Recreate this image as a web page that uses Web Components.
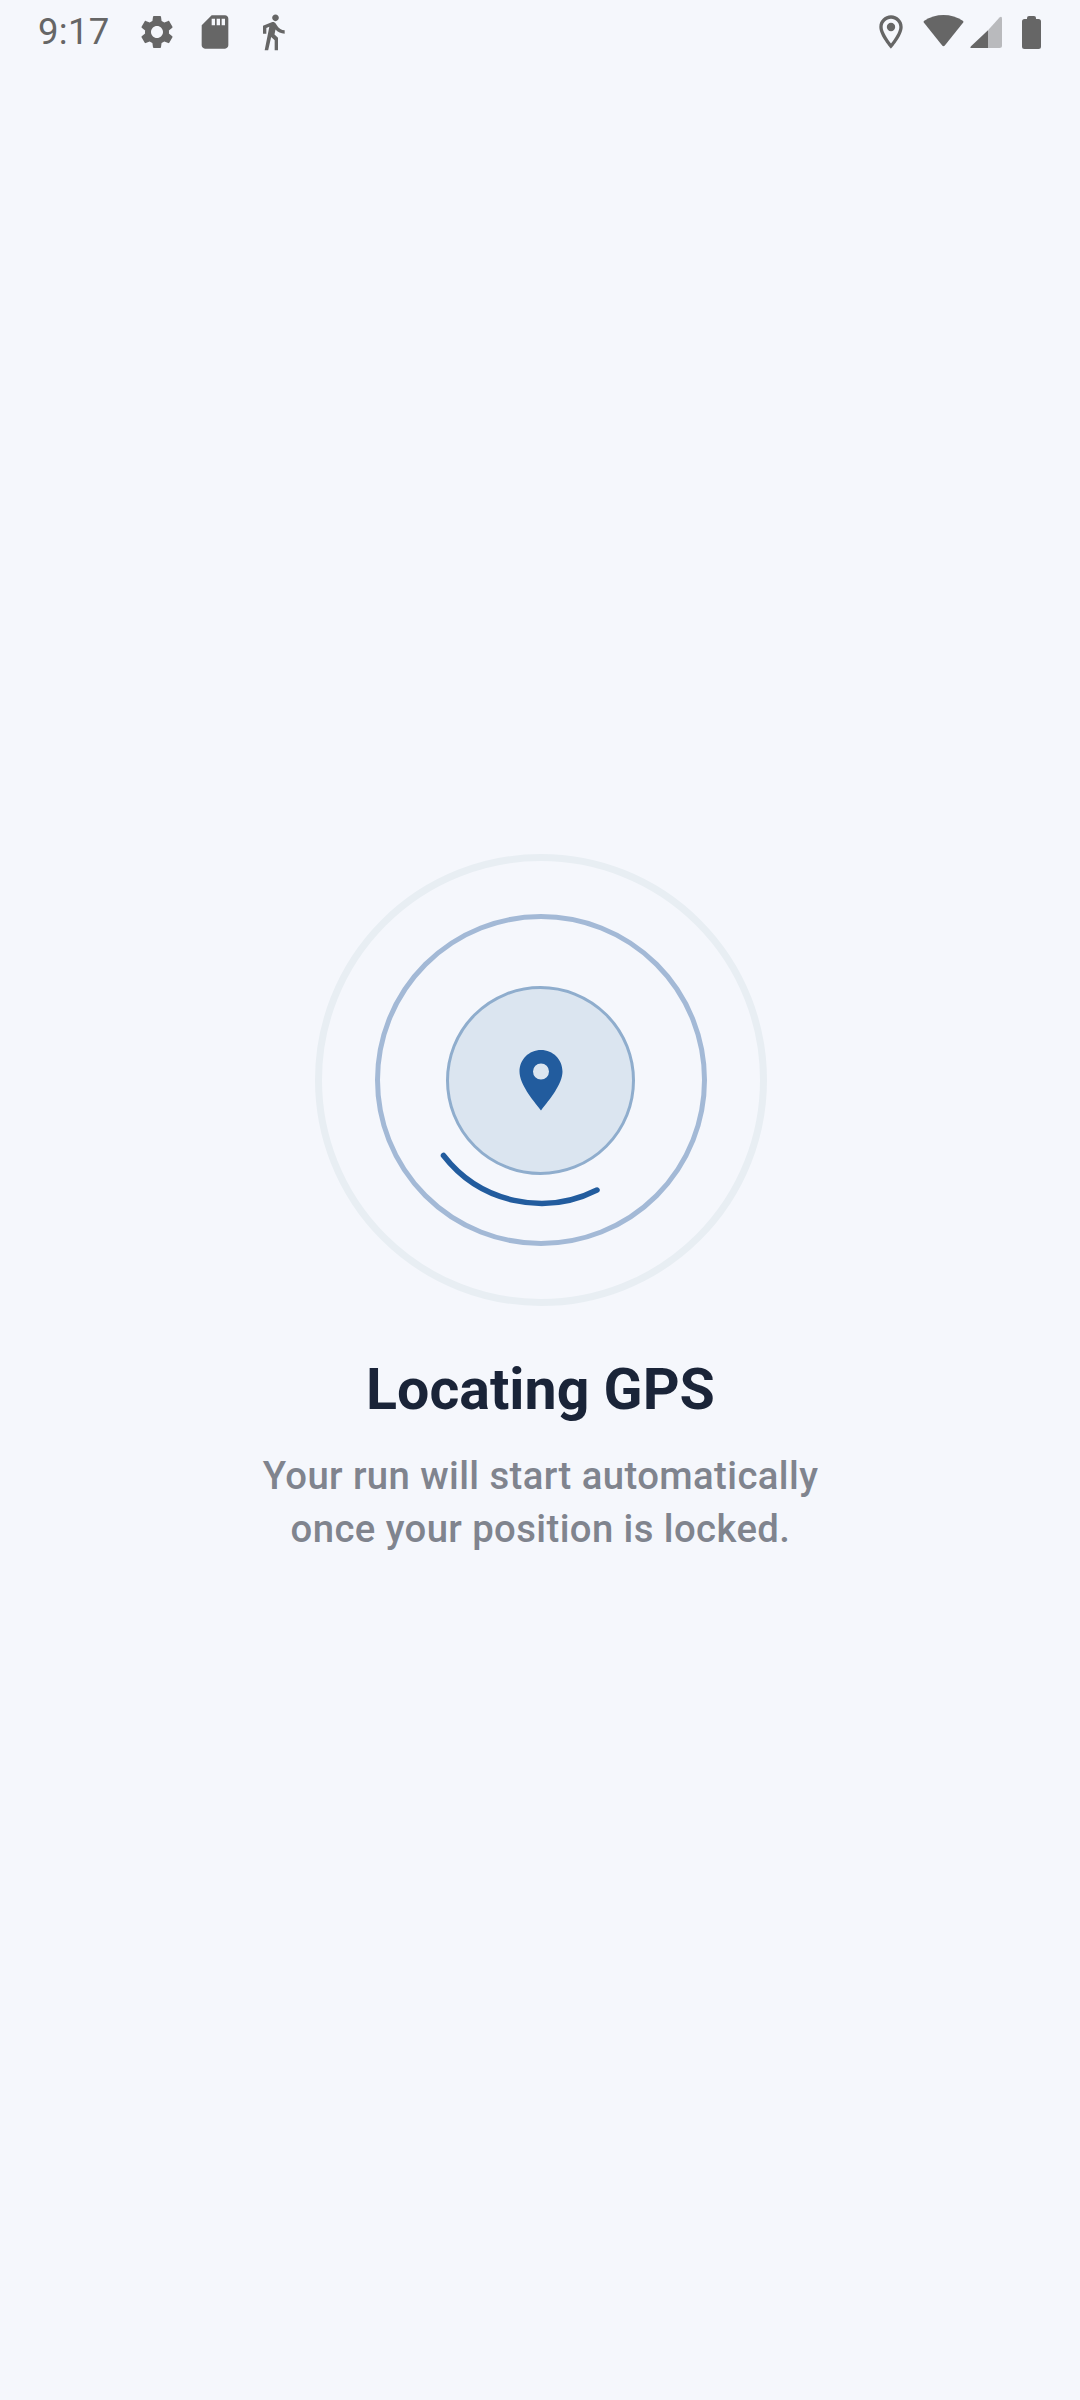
<!DOCTYPE html>
<html lang="en"><head><meta charset="utf-8"><title>Locating GPS</title>
<style>
html,body{margin:0;padding:0;background:#f5f7fc}
body{width:1080px;height:2400px;overflow:hidden;font-family:Roboto,"Liberation Sans",sans-serif}
</style></head><body>
<gps-screen>
  <status-bar slot="status" time="9:17"></status-bar>
  <gps-radar slot="radar"></gps-radar>
  <span slot="title">Locating GPS</span>
  <span slot="sub">Your run will start automatically<br>once your position is locked.</span>
</gps-screen>
<script>
class GpsScreen extends HTMLElement{constructor(){super();this.attachShadow({mode:'open'}).innerHTML=`
<style>
:host{display:flex;flex-direction:column;width:1080px;height:2400px;background:#f5f7fc}
main{display:flex;flex-direction:column;align-items:center;padding-top:790px}
h1{margin:52px 0 0;font:700 57.3px/64px Roboto,sans-serif;color:#1a2438;text-align:center;padding-left:1px}
p{margin:26.5px 0 0;font:500 38.3px/53px Roboto,sans-serif;color:#80848e;text-align:center;letter-spacing:.4px;padding-left:1px}
</style>
<slot name="status"></slot>
<main><slot name="radar"></slot><h1><slot name="title"></slot></h1><p><slot name="sub"></slot></p></main>`}}
customElements.define('gps-screen',GpsScreen);

class StatusBar extends HTMLElement{constructor(){super();this.attachShadow({mode:'open'}).innerHTML=`
<style>
:host{display:flex;align-items:center;height:64px;padding:0 38px;box-sizing:border-box;width:1080px;color:#666;flex:none}
.time{font:400 36.5px/42px Roboto,sans-serif;letter-spacing:.3px;width:98.5px;color:#666}
.left,.right{display:flex;align-items:center}
.left{gap:18px}
.right{margin-left:auto;margin-right:1px;position:relative}
svg{display:block;fill:currentColor;flex:none}
</style>
<div class="left">
<span class="time">${this.getAttribute('time')}</span>
<svg width="40" height="40" viewBox="0 0 24 24" style="margin-left:-18px"><path d="M19.14 12.94c.04-.3.06-.61.06-.94 0-.32-.02-.64-.07-.94l2.03-1.58c.18-.14.23-.41.12-.61l-1.92-3.32c-.12-.22-.37-.29-.59-.22l-2.39.96c-.5-.38-1.03-.7-1.62-.94l-.36-2.54c-.04-.24-.24-.41-.48-.41h-3.84c-.24 0-.43.17-.47.41l-.36 2.54c-.59.24-1.13.57-1.62.94l-2.39-.96c-.22-.08-.47 0-.59.22L2.74 8.87c-.12.21-.08.47.12.61l2.03 1.58c-.05.3-.09.63-.09.94s.02.64.07.94l-2.03 1.58c-.18.14-.23.41-.12.61l1.92 3.32c.12.22.37.29.59.22l2.39-.96c.5.38 1.03.7 1.62.94l.36 2.54c.05.24.24.41.48.41h3.84c.24 0 .44-.17.47-.41l.36-2.54c.59-.24 1.13-.56 1.62-.94l2.39.96c.22.08.47 0 .59-.22l1.92-3.32c.12-.22.07-.47-.12-.61l-2.01-1.58zM12 15.6c-1.98 0-3.6-1.62-3.6-3.6s1.62-3.6 3.6-3.6 3.6 1.62 3.6 3.6-1.62 3.6-3.6 3.6z"/></svg>
<svg width="40" height="40" viewBox="0 0 24 24"><path d="M18 2h-8L4.02 8 4 20c0 1.1.9 2 2 2h12c1.1 0 2-.9 2-2V4c0-1.1-.9-2-2-2zm-6 6h-2V4h2v4zm3 0h-2V4h2v4zm3 0h-2V4h2v4z"/></svg>
<svg width="40" height="40" viewBox="0 0 24 24"><path d="M13.5 5.5c1.1 0 2-.9 2-2s-.9-2-2-2-2 .9-2 2 .9 2 2 2zM9.8 8.9L7 23h2.1l1.8-8 2.1 2v6h2v-7.5l-2.1-2 .6-3C14.8 12 16.8 13 19 13v-2c-1.9 0-3.5-1-4.3-2.4l-1-1.6c-.4-.6-1-1-1.7-1-.3 0-.5.1-.8.1L6 8.3V13h2V9.6l1.8-.7"/></svg>
</div>
<div class="right">
<svg width="40" height="40" viewBox="0 0 24 24" style="margin-right:12.5px;margin-left:1.5px"><path d="M12 2C8.13 2 5 5.13 5 9c0 5.25 7 13 7 13s7-7.75 7-13c0-3.87-3.13-7-7-7zM7 9c0-2.76 2.24-5 5-5s5 2.24 5 5c0 2.88-2.88 7.19-5 9.88C9.92 16.21 7 11.85 7 9z"/><circle cx="12" cy="9" r="2.5"/></svg>
<svg width="41" height="32" viewBox="0 0 41 32" style="margin-right:6px;margin-top:-2px"><path d="M.8 7.6Q0 6.5 1.2 5.7C7 2 13.5 0 20.5 0S34 2 39.8 5.7Q41 6.5 40.2 7.6L21.8 30.5Q20.5 32 19.2 30.5Z"/></svg>
<svg width="32" height="32" viewBox="0 0 32 32" style="margin-right:20px"><path d="M18 14.2L29.5 1.6Q32 -.5 32 3V29.5Q32 32 29.5 32H18Z" opacity=".42"/><path d="M18 14.2V32H1.5Q-.5 32 1 30.2Z"/></svg>
<svg width="19" height="33" viewBox="0 0 19 33"><path d="M5 3V2Q5 0 7 0H12Q14 0 14 2V3H16.5Q19 3 19 5.5V30.5Q19 33 16.5 33H2.5Q0 33 0 30.5V5.5Q0 3 2.5 3Z"/></svg>
</div>`}}
customElements.define('status-bar',StatusBar);

class GpsRing extends HTMLElement{constructor(){super();this.attachShadow({mode:'open'}).innerHTML=`
<style>
:host{display:grid;place-items:center;box-sizing:border-box;border-radius:50%;flex:none;
width:var(--d);height:var(--d);border:var(--b) solid var(--c);background:var(--f,transparent)}
</style><slot></slot>`}}
customElements.define('gps-ring',GpsRing);

class GpsRadar extends HTMLElement{constructor(){super();this.attachShadow({mode:'open'}).innerHTML=`
<style>
:host{display:block;position:relative;width:452px;height:452px;flex:none;margin-left:1px}
.o{--d:452px;--b:7px;--c:#e8eef3}
.m{--d:332px;--b:5px;--c:#a3b9d6}
.i{--d:189px;--b:3px;--c:#8fadcd;--f:#dbe5f0}
.arc{position:absolute;left:0;top:0;width:452px;height:452px;pointer-events:none}
.pin{display:block}
</style>
<gps-ring class="o"><gps-ring class="m"><gps-ring class="i">
<svg class="pin" width="60" height="66" viewBox="0 0 60 66"><path fill="#225c9e" fill-rule="evenodd" d="M30 3C18 3 8.5 12.5 8.5 24.5C8.5 37 21 52 30 63.5C39 52 51.5 37 51.5 24.5C51.5 12.5 42 3 30 3ZM30 16.5A8 8 0 1 1 30 32.5A8 8 0 1 1 30 16.5Z"/></svg>
</gps-ring></gps-ring></gps-ring>
<svg class="arc" viewBox="0 0 452 452"><path d="M128.5 301.5A123.5 123.5 0 0 0 282 336" fill="none" stroke="#225c9e" stroke-width="5.5" stroke-linecap="round"/></svg>`}}
customElements.define('gps-radar',GpsRadar);
</script>
</body></html>
